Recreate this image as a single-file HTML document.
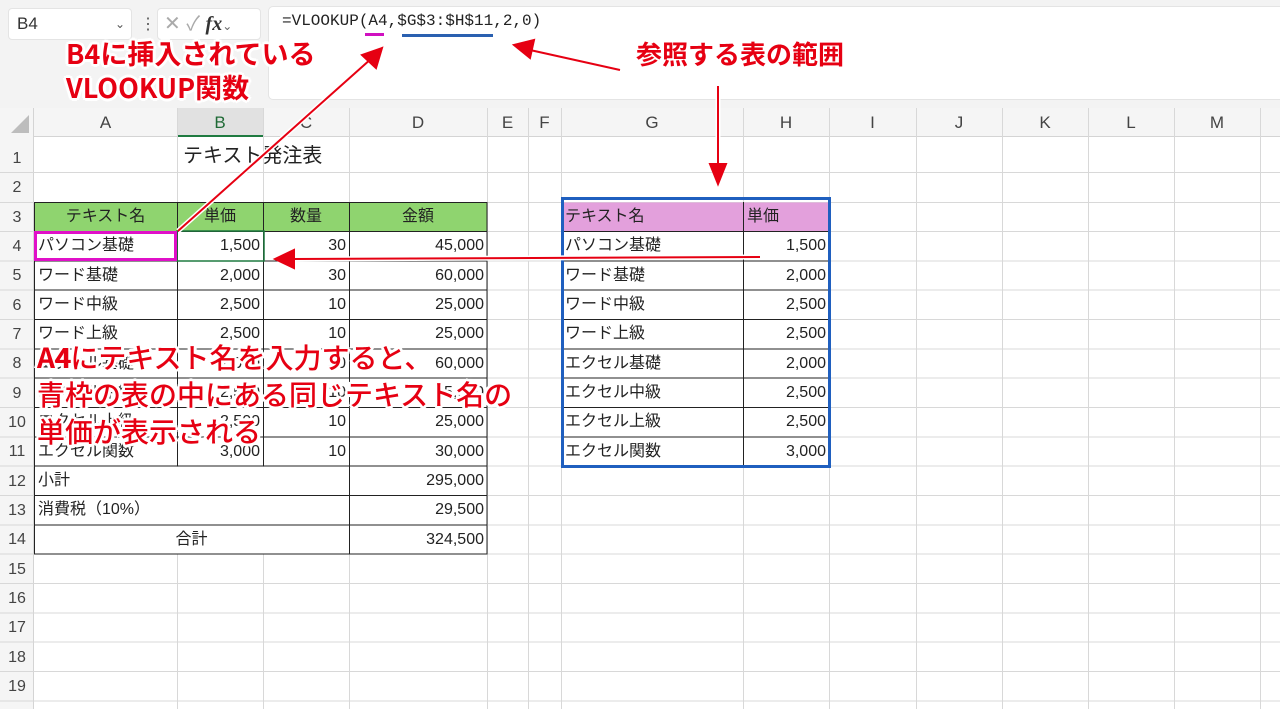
<!DOCTYPE html>
<html><head><meta charset="utf-8"><style>
*{margin:0;padding:0;box-sizing:border-box}
body{width:1280px;height:709px;overflow:hidden;background:#fff;position:relative;font-family:"Liberation Sans","Noto Sans CJK JP",sans-serif;color:#222}
.a{position:absolute}
.c{position:absolute;font-size:16px;line-height:30px;height:30px;white-space:nowrap}
.l{padding-left:4px}.r{text-align:right;padding-right:3px}.m{text-align:center}
.h{position:absolute;top:108px;height:29px;line-height:29px;text-align:center;font-size:17px;color:#444}
.rn{position:absolute;left:0;width:34px;text-align:center;font-size:16px;color:#444;line-height:29px}
.red{position:absolute;color:#e60012;font-weight:bold;white-space:nowrap;font-family:"Noto Sans CJK JP",sans-serif;
text-shadow:3px 0 #fff,-3px 0 #fff,0 3px #fff,0 -3px #fff,2px 2px #fff,-2px -2px #fff,2px -2px #fff,-2px 2px #fff,0 0 5px #fff}
</style></head><body>
<div class="a" style="left:0;top:0;width:1280px;height:108px;background:#f3f3f3"></div>
<div class="a" style="left:8px;top:8px;width:124px;height:32px;background:#fff;border-radius:4px;border:1px solid #e4e4e4;font-size:17px;line-height:30px;padding-left:8px;color:#333">B4<span style="position:absolute;right:6px;font-size:12px;color:#555">&#8964;</span></div>
<div class="a" style="left:140px;top:14px;font-size:16px;color:#555">&#8942;</div>
<div class="a" style="left:157px;top:8px;width:104px;height:32px;background:#fff;border-radius:4px;border:1px solid #e4e4e4;font-size:20px;line-height:30px;color:#aaa;padding-left:6px">✕ ✓ <i style="font-family:'Liberation Serif',serif;color:#333;font-weight:bold">fx</i><span style="font-size:12px;color:#666">&#8964;</span></div>
<div class="a" style="left:268px;top:6px;width:1020px;height:94px;background:#fff;border-radius:5px;border:1px solid #e4e4e4"></div>
<div class="a" style="left:282px;top:12px;font-family:'Liberation Mono',monospace;font-size:16px;color:#222">=VLOOKUP(A4,$G$3:$H$11,2,0)</div>
<div class="a" style="left:365px;top:33px;width:19px;height:3px;background:#d010c0"></div>
<div class="a" style="left:402px;top:34px;width:91px;height:3px;background:#2a60b0"></div>
<div class="a" style="left:0;top:108px;width:1280px;height:29px;background:#f5f5f5;border-bottom:1px solid #d4d4d4"></div>
<div class="a" style="left:0;top:108px;width:34px;height:601px;background:#f5f5f5;border-right:1px solid #d4d4d4"></div>
<div class="a" style="left:177px;top:108px;width:86px;height:29px;background:#e1e1e1;border-bottom:2px solid #1f7a40"></div>
<svg class="a" style="left:0;top:0" width="1280" height="709">
<polygon points="29,115 29,133 11,133" fill="#bdbdbd"/>
<g stroke="#d8d8d8" stroke-width="1">
<line x1="177.5" y1="108" x2="177.5" y2="709"/><line x1="263.5" y1="108" x2="263.5" y2="709"/><line x1="349.5" y1="108" x2="349.5" y2="709"/><line x1="487.5" y1="108" x2="487.5" y2="709"/><line x1="528.5" y1="108" x2="528.5" y2="709"/><line x1="561.5" y1="108" x2="561.5" y2="709"/><line x1="743.5" y1="108" x2="743.5" y2="709"/><line x1="829.5" y1="108" x2="829.5" y2="709"/><line x1="916.5" y1="108" x2="916.5" y2="709"/><line x1="1002.5" y1="108" x2="1002.5" y2="709"/><line x1="1088.5" y1="108" x2="1088.5" y2="709"/><line x1="1174.5" y1="108" x2="1174.5" y2="709"/><line x1="1260.5" y1="108" x2="1260.5" y2="709"/>
<line x1="0" y1="172.5" x2="1280" y2="172.5"/><line x1="0" y1="202.5" x2="1280" y2="202.5"/><line x1="0" y1="231.5" x2="1280" y2="231.5"/><line x1="0" y1="261" x2="1280" y2="261"/><line x1="0" y1="290" x2="1280" y2="290"/><line x1="0" y1="319.5" x2="1280" y2="319.5"/><line x1="0" y1="349" x2="1280" y2="349"/><line x1="0" y1="378" x2="1280" y2="378"/><line x1="0" y1="407.5" x2="1280" y2="407.5"/><line x1="0" y1="437" x2="1280" y2="437"/><line x1="0" y1="466" x2="1280" y2="466"/><line x1="0" y1="495.5" x2="1280" y2="495.5"/><line x1="0" y1="525" x2="1280" y2="525"/><line x1="0" y1="554" x2="1280" y2="554"/><line x1="0" y1="583.5" x2="1280" y2="583.5"/><line x1="0" y1="613" x2="1280" y2="613"/><line x1="0" y1="642" x2="1280" y2="642"/><line x1="0" y1="671.5" x2="1280" y2="671.5"/><line x1="0" y1="701" x2="1280" y2="701"/>
</g>
<rect x="35" y="467" width="314" height="87" fill="#fff"/>
<rect x="34" y="202.5" width="453" height="29" fill="#8fd46f"/>
<rect x="561" y="202.5" width="268" height="29" fill="#e3a0dc"/>
<g stroke="#222" stroke-width="1" fill="none">
<rect x="34.5" y="202.5" width="452.5" height="351.5"/>
<line x1="177.5" y1="202" x2="177.5" y2="466"/><line x1="263.5" y1="202" x2="263.5" y2="466"/><line x1="349.5" y1="202" x2="349.5" y2="554"/>
<line x1="34" y1="231.5" x2="487" y2="231.5"/><line x1="34" y1="261" x2="487" y2="261"/><line x1="34" y1="290" x2="487" y2="290"/><line x1="34" y1="319.5" x2="487" y2="319.5"/><line x1="34" y1="349" x2="487" y2="349"/><line x1="34" y1="378" x2="487" y2="378"/><line x1="34" y1="407.5" x2="487" y2="407.5"/><line x1="34" y1="437" x2="487" y2="437"/><line x1="34" y1="466" x2="487" y2="466"/><line x1="34" y1="495.5" x2="487" y2="495.5"/><line x1="34" y1="525" x2="487" y2="525"/>
<line x1="743.5" y1="202" x2="743.5" y2="466"/>
<line x1="561" y1="231.5" x2="829" y2="231.5"/><line x1="561" y1="261" x2="829" y2="261"/><line x1="561" y1="290" x2="829" y2="290"/><line x1="561" y1="319.5" x2="829" y2="319.5"/><line x1="561" y1="349" x2="829" y2="349"/><line x1="561" y1="378" x2="829" y2="378"/><line x1="561" y1="407.5" x2="829" y2="407.5"/><line x1="561" y1="437" x2="829" y2="437"/>
</g>
<rect x="562.5" y="198.5" width="267" height="268" fill="none" stroke="#1f5fbf" stroke-width="3"/>
<rect x="177" y="231" width="87" height="30" fill="none" stroke="#1f7a40" stroke-width="1.5"/>
<rect x="35.5" y="232.5" width="140" height="27" fill="none" stroke="#e010c8" stroke-width="3"/>
</svg>
<div class="h" style="left:34px;width:143px">A</div><div class="h" style="left:177px;width:86px;color:#1f6a36">B</div><div class="h" style="left:263px;width:86px">C</div><div class="h" style="left:349px;width:138px">D</div><div class="h" style="left:487px;width:41px">E</div><div class="h" style="left:528px;width:33px">F</div><div class="h" style="left:561px;width:182px">G</div><div class="h" style="left:743px;width:86px">H</div><div class="h" style="left:829px;width:87px">I</div><div class="h" style="left:916px;width:86px">J</div><div class="h" style="left:1002px;width:86px">K</div><div class="h" style="left:1088px;width:86px">L</div><div class="h" style="left:1174px;width:86px">M</div>
<div class="rn" style="top:144px">1</div><div class="rn" style="top:173px">2</div><div class="rn" style="top:203px">3</div><div class="rn" style="top:232px">4</div><div class="rn" style="top:261px">5</div><div class="rn" style="top:291px">6</div><div class="rn" style="top:320px">7</div><div class="rn" style="top:349px">8</div><div class="rn" style="top:379px">9</div><div class="rn" style="top:408px">10</div><div class="rn" style="top:437px">11</div><div class="rn" style="top:467px">12</div><div class="rn" style="top:496px">13</div><div class="rn" style="top:525px">14</div><div class="rn" style="top:555px">15</div><div class="rn" style="top:584px">16</div><div class="rn" style="top:613px">17</div><div class="rn" style="top:643px">18</div><div class="rn" style="top:672px">19</div>
<div class="c" style="left:183px;top:140px;font-size:20px;line-height:32px">テキスト発注表</div>
<div class="c m" style="left:34px;top:202px;width:143px">テキスト名</div><div class="c m" style="left:177px;top:202px;width:86px">単価</div><div class="c m" style="left:263px;top:202px;width:86px">数量</div><div class="c m" style="left:349px;top:202px;width:138px">金額</div>
<div class="c l" style="left:34px;top:231px">パソコン基礎</div><div class="c r" style="left:177px;top:231px;width:86px">1,500</div><div class="c r" style="left:263px;top:231px;width:86px">30</div><div class="c r" style="left:349px;top:231px;width:138px">45,000</div>
<div class="c l" style="left:34px;top:261px">ワード基礎</div><div class="c r" style="left:177px;top:261px;width:86px">2,000</div><div class="c r" style="left:263px;top:261px;width:86px">30</div><div class="c r" style="left:349px;top:261px;width:138px">60,000</div>
<div class="c l" style="left:34px;top:290px">ワード中級</div><div class="c r" style="left:177px;top:290px;width:86px">2,500</div><div class="c r" style="left:263px;top:290px;width:86px">10</div><div class="c r" style="left:349px;top:290px;width:138px">25,000</div>
<div class="c l" style="left:34px;top:319px">ワード上級</div><div class="c r" style="left:177px;top:319px;width:86px">2,500</div><div class="c r" style="left:263px;top:319px;width:86px">10</div><div class="c r" style="left:349px;top:319px;width:138px">25,000</div>
<div class="c l" style="left:34px;top:349px">エクセル基礎</div><div class="c r" style="left:177px;top:349px;width:86px">2,000</div><div class="c r" style="left:263px;top:349px;width:86px">30</div><div class="c r" style="left:349px;top:349px;width:138px">60,000</div>
<div class="c l" style="left:34px;top:378px">エクセル中級</div><div class="c r" style="left:177px;top:378px;width:86px">2,500</div><div class="c r" style="left:263px;top:378px;width:86px">10</div><div class="c r" style="left:349px;top:378px;width:138px">25,000</div>
<div class="c l" style="left:34px;top:407px">エクセル上級</div><div class="c r" style="left:177px;top:407px;width:86px">2,500</div><div class="c r" style="left:263px;top:407px;width:86px">10</div><div class="c r" style="left:349px;top:407px;width:138px">25,000</div>
<div class="c l" style="left:34px;top:437px">エクセル関数</div><div class="c r" style="left:177px;top:437px;width:86px">3,000</div><div class="c r" style="left:263px;top:437px;width:86px">10</div><div class="c r" style="left:349px;top:437px;width:138px">30,000</div>
<div class="c l" style="left:34px;top:466px">小計</div><div class="c r" style="left:349px;top:466px;width:138px">295,000</div>
<div class="c l" style="left:34px;top:495px">消費税（10%）</div><div class="c r" style="left:349px;top:495px;width:138px">29,500</div>
<div class="c m" style="left:34px;top:525px;width:315px">合計</div><div class="c r" style="left:349px;top:525px;width:138px">324,500</div>
<div class="c l" style="left:561px;top:202px">テキスト名</div><div class="c l" style="left:743px;top:202px">単価</div>
<div class="c l" style="left:561px;top:231px">パソコン基礎</div><div class="c r" style="left:743px;top:231px;width:86px">1,500</div>
<div class="c l" style="left:561px;top:261px">ワード基礎</div><div class="c r" style="left:743px;top:261px;width:86px">2,000</div>
<div class="c l" style="left:561px;top:290px">ワード中級</div><div class="c r" style="left:743px;top:290px;width:86px">2,500</div>
<div class="c l" style="left:561px;top:319px">ワード上級</div><div class="c r" style="left:743px;top:319px;width:86px">2,500</div>
<div class="c l" style="left:561px;top:349px">エクセル基礎</div><div class="c r" style="left:743px;top:349px;width:86px">2,000</div>
<div class="c l" style="left:561px;top:378px">エクセル中級</div><div class="c r" style="left:743px;top:378px;width:86px">2,500</div>
<div class="c l" style="left:561px;top:407px">エクセル上級</div><div class="c r" style="left:743px;top:407px;width:86px">2,500</div>
<div class="c l" style="left:561px;top:437px">エクセル関数</div><div class="c r" style="left:743px;top:437px;width:86px">3,000</div>
<svg class="a" style="left:0;top:0" width="1280" height="709">
<g stroke="#fff" stroke-width="5" fill="#fff" stroke-linejoin="round">
<line x1="178" y1="231" x2="372" y2="58"/><line x1="620" y1="70" x2="530" y2="50"/><line x1="718" y1="86" x2="718" y2="168"/><line x1="760" y1="257" x2="292" y2="259"/>
</g>
<g stroke="#e60012" stroke-width="2" fill="#e60012">
<line x1="178" y1="231" x2="372" y2="58"/><polygon points="382,48 376,68 362,55"/>
<line x1="620" y1="70" x2="530" y2="50"/><polygon points="514,45 534,40 530,58"/>
<line x1="718" y1="86" x2="718" y2="168"/><polygon points="718,184 710,164 726,164"/>
<line x1="760" y1="257" x2="292" y2="259"/><polygon points="275,259 294,250 294,268"/>
</g>
</svg>
<div class="red" style="left:66px;top:36px;font-size:27px;line-height:34px">B4に挿入されている</div>
<div class="red" style="left:66px;top:70px;font-size:27px;line-height:34px">VLOOKUP関数</div>
<div class="red" style="left:636px;top:37px;font-size:26px;line-height:34px">参照する表の範囲</div>
<div class="red" style="left:37px;top:339px;font-size:28px;line-height:37px;font-weight:500">A4<span>にテキスト名を入力すると、</span><br>青枠の表の中にある同じテキスト名の<br>単価が表示される</div>
<div class="red" style="left:37px;top:339px;font-size:28px;line-height:37px;text-shadow:none">A4</div>
</body></html>
